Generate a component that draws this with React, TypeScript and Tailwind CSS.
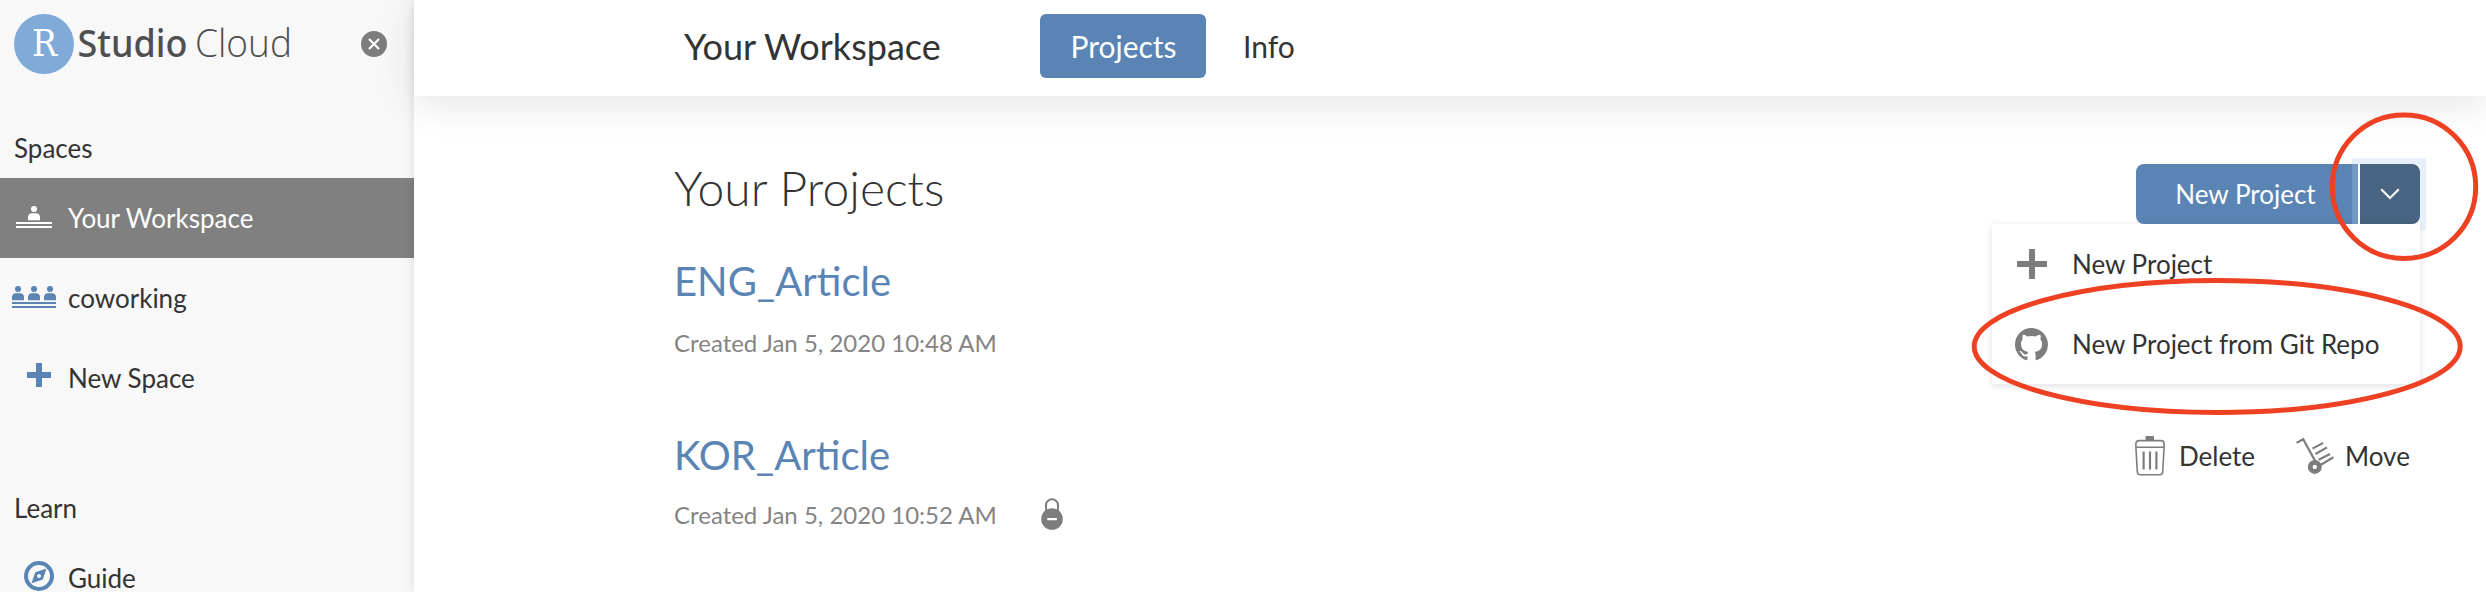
import React from "react";

function Person({ x }: { x: number }) {
  return (
    <g>
      <circle cx={x + 6} cy="3" r="3" />
      <path d={`M${x} 14.3V11.6Q${x} 7.3 ${x + 4.3} 7.3H${x + 7.7}Q${x + 12} 7.3 ${x + 12} 11.6V14.3Z`} />
    </g>
  );
}

function SoloIcon() {
  return (
    <svg width="36" height="22" viewBox="0 0 36 22" fill="currentColor">
      <Person x={12} />
      <path d="M0 16h36v2H0zM0 20h36v2H0z" />
    </svg>
  );
}

function TeamIcon() {
  return (
    <svg width="44" height="22" viewBox="0 0 44 22" fill="currentColor">
      <Person x={0} />
      <Person x={16} />
      <Person x={32} />
      <path d="M0 16h44v2H0zM0 20h44v2H0z" />
    </svg>
  );
}

function PlusIcon({ size }: { size: number }) {
  return (
    <svg width={size} height={size} viewBox={`0 0 ${size} ${size}`} fill="currentColor">
      <path d={`M${size / 2 - 3} 0h6v${size}h-6zM0 ${size / 2 - 3}h${size}v6H0z`} />
    </svg>
  );
}

function CompassIcon() {
  return (
    <svg width="30" height="30" viewBox="0 0 30 30">
      <circle cx="15" cy="15" r="13" fill="none" stroke="currentColor" strokeWidth="4" />
      <path fill="currentColor" fillRule="evenodd" d="M22.5 7.5 18.8 18.6 7.5 22.3 11.3 11.3ZM15 13a2 2 0 1 0 0 4 2 2 0 0 0 0-4Z" />
    </svg>
  );
}

function GitHubIcon() {
  return (
    <svg width="33" height="33" viewBox="0 0 16 16" fill="currentColor">
      <path d="M8 0C3.58 0 0 3.58 0 8c0 3.54 2.29 6.53 5.47 7.59.4.07.55-.17.55-.38 0-.19-.01-.82-.01-1.49-2.01.37-2.53-.49-2.69-.94-.09-.23-.48-.94-.82-1.13-.28-.15-.68-.52-.01-.53.63-.01 1.08.58 1.23.82.72 1.21 1.87.87 2.33.66.07-.52.28-.87.51-1.07-1.78-.2-3.64-.89-3.64-3.95 0-.87.31-1.59.82-2.15-.08-.2-.36-1.02.08-2.12 0 0 .67-.21 2.2.82.64-.18 1.32-.27 2-.27s1.36.09 2 .27c1.53-1.04 2.2-.82 2.2-.82.44 1.1.16 1.92.08 2.12.51.56.82 1.27.82 2.15 0 3.07-1.87 3.75-3.65 3.95.29.25.54.73.54 1.48 0 1.07-.01 1.93-.01 2.2 0 .21.15.46.55.38A8.01 8.01 0 0 0 16 8c0-4.42-3.58-8-8-8Z" />
    </svg>
  );
}

function LockIcon() {
  return (
    <svg width="22" height="32" viewBox="0 0 22 32">
      <path d="M5 14V7.2a6 6 0 0 1 12 0V14" fill="none" stroke="#7d7d7d" strokeWidth="2" />
      <circle cx="11" cy="21" r="10.8" fill="#7d7d7d" />
      <path d="M6.3 20h9.6v2.2H6.3z" fill="#fff" />
    </svg>
  );
}

function TrashIcon() {
  return (
    <svg width="30" height="40" viewBox="0 0 30 40" fill="none" stroke="#7d7d7d">
      <path d="M10.5 0h8.5v4.5h-8.5z" fill="#7d7d7d" stroke="none" />
      <path d="M0.9 11.3V8Q0.9 4.6 4.2 4.6H25.8Q29.1 4.6 29.1 8V11.3ZM0.9 11.3 2.3 35.8Q2.5 38.8 5 38.8H25Q27.5 38.8 27.7 35.8L29.1 11.3" strokeWidth="1.6" />
      <path d="M8.6 15.5v18M15 15.5v18M21.4 15.5v18" strokeWidth="2.2" />
    </svg>
  );
}

function DollyIcon() {
  return (
    <svg width="38" height="36" viewBox="0 0 38 36" fill="none" stroke="#7d7d7d" strokeWidth="2.2">
      <path d="M0.6 4.9 7.2 1.2 20.5 25.5M16.5 10.6 27.2 4.9M19.5 16 31 9.4M22.7 21.7 34 16M24.5 27 37.4 19.2" />
      <circle cx="18.8" cy="28.9" r="4.6" strokeWidth="4.8" />
    </svg>
  );
}

function SideRow({ icon, iconClass, label, active }: { icon: React.ReactNode; iconClass: string; label: string; active?: boolean }) {
  return (
    <div className={active ? "flex h-20 shrink-0 items-center bg-[#808080] text-white" : "flex h-20 shrink-0 items-center"}>
      <div className={`flex w-[68px] shrink-0 ${active ? "text-white" : "text-[#5a84b4]"} ${iconClass}`}>{icon}</div>
      <span>{label}</span>
    </div>
  );
}

function Sidebar() {
  return (
    <aside className="flex w-[414px] shrink-0 flex-col bg-[#f8f8f8]">
      <div className="flex h-[88px] shrink-0 items-center justify-between pl-[14px] pr-[27px]">
        <svg width="290" height="60" viewBox="0 0 290 60">
          <circle cx="30" cy="30" r="30" fill="#80aad8" />
          <text x="18" y="42" fontFamily="DejaVu Serif, serif" fontSize="36.5" fill="#fff" textLength="25" lengthAdjust="spacingAndGlyphs">R</text>
          <text x="63.5" y="43" fontFamily="Noto Sans, sans-serif" fontSize="37.5" fontWeight="500" fill="#4f4f51" textLength="110" lengthAdjust="spacingAndGlyphs">Studio</text>
          <text x="181" y="43" fontFamily="Open Sans, sans-serif" fontSize="38" fontWeight="300" fill="#4f4f51" textLength="97" lengthAdjust="spacingAndGlyphs">Cloud</text>
        </svg>
        <svg width="26" height="26" viewBox="0 0 26 26">
          <circle cx="13" cy="13" r="13" fill="#7d7d7d" />
          <path d="m8 8 10 10M18 8 8 18" stroke="#fff" strokeWidth="2.2" />
        </svg>
      </div>
      <div className="mt-[30px] flex h-[60px] shrink-0 items-center pl-[14px]">Spaces</div>
      <SideRow icon={<SoloIcon />} iconClass="pl-4 pb-[2px]" label="Your Workspace" active />
      <SideRow icon={<TeamIcon />} iconClass="pl-3 pb-[2px]" label="coworking" />
      <SideRow icon={<PlusIcon size={24} />} iconClass="pl-[27px] pb-[6px]" label="New Space" />
      <div className="mt-[60px] flex h-[60px] shrink-0 items-center pl-[14px]">Learn</div>
      <SideRow icon={<CompassIcon />} iconClass="pl-6 pb-[4px]" label="Guide" />
    </aside>
  );
}

function Header() {
  return (
    <header className="relative z-10 flex h-24 shrink-0 items-center bg-white pl-[270px] shadow-[0_8px_40px_rgba(0,0,0,0.11)]">
      <h1 className="w-[356px] pb-1 text-[36px] leading-none">Your Workspace</h1>
      <nav className="flex items-center pb-1 text-[30px] leading-none">
        <span className="flex h-16 w-[166px] items-center justify-center rounded-md bg-[#5a84b4] pl-px text-white">Projects</span>
        <span className="ml-[37px]">Info</span>
      </nav>
    </header>
  );
}

function NewProjectButton() {
  return (
    <div className="relative flex h-[60px]">
      <button className="flex w-[222px] items-center justify-center rounded-l-lg bg-[#5a84b4] pr-[3px] text-white">New Project</button>
      <button className="ml-[2px] flex w-[60px] items-center justify-center rounded-r-lg bg-[#486482]">
        <svg width="20" height="12" viewBox="0 0 20 12" fill="none" stroke="#fff" strokeWidth="2">
          <path d="m1.2 1.2 8.8 8.8 8.8-8.8" />
        </svg>
      </button>
      <div className="pointer-events-none absolute -top-[6px] left-[216px] h-[72px] w-[74px] border-[6px] border-[#abcaed]/30" />
      <div className="absolute right-0 top-[60px] z-10 flex w-[428px] flex-col bg-white shadow-[0_2px_8px_rgba(0,0,0,0.12)]">
        <div className="flex h-20 items-center">
          <span className="flex w-[80px] shrink-0 pl-[25px] text-[#7d7d7d]"><PlusIcon size={30} /></span>
          <span>New Project</span>
        </div>
        <div className="flex h-20 items-center">
          <span className="flex w-[80px] shrink-0 pl-[23px] text-[#7d7d7d]"><GitHubIcon /></span>
          <span>New Project from Git Repo</span>
        </div>
      </div>
    </div>
  );
}

function Annotations() {
  return (
    <svg className="pointer-events-none absolute right-0 top-0 z-20" width="526" height="430" viewBox="1960 0 526 430" fill="none" stroke="#ee4023" strokeWidth="5">
      <ellipse cx="2404" cy="186.7" rx="71.7" ry="71.7" />
      <ellipse cx="2217.2" cy="346.5" rx="243" ry="66" />
    </svg>
  );
}

export default function App() {
  return (
    <div className="relative flex h-[592px] w-full overflow-hidden bg-white font-['Lato',sans-serif] text-[26px] leading-none text-[#333]">
      <Sidebar />
      <main className="flex min-w-0 grow flex-col bg-white shadow-[0_0_10px_rgba(0,0,0,0.12)]">
        <Header />
        <div className="flex grow flex-col pl-[260px] pr-[66px]">
          <div className="flex h-[128px] items-end justify-between">
            <h2 className="pb-3 text-[48px] font-light leading-none">Your Projects</h2>
            <NewProjectButton />
          </div>
          <article className="flex h-[174px] flex-col">
            <h3 className="mt-[37px] text-[40px] leading-[40px] text-[#5a84b4]">ENG_Article</h3>
            <p className="mt-[30px] text-[24px] leading-[24px] text-[#848484]">Created Jan 5, 2020 10:48 AM</p>
          </article>
          <article className="flex items-start justify-between">
            <div className="flex flex-col">
              <h3 className="mt-[37px] text-[40px] leading-[40px] text-[#5a84b4]">KOR_Article</h3>
              <div className="mt-[23px] flex h-8 items-center text-[24px] leading-[24px] text-[#848484]">
                <p className="w-[367px] pt-[2px]">Created Jan 5, 2020 10:52 AM</p>
                <LockIcon />
              </div>
            </div>
            <div className="mt-[38px] flex h-10 items-center">
              <TrashIcon />
              <span className="ml-[14px] w-[117px]">Delete</span>
              <DollyIcon />
              <span className="ml-[11px] w-[75px]">Move</span>
            </div>
          </article>
        </div>
      </main>
      <Annotations />
    </div>
  );
}
